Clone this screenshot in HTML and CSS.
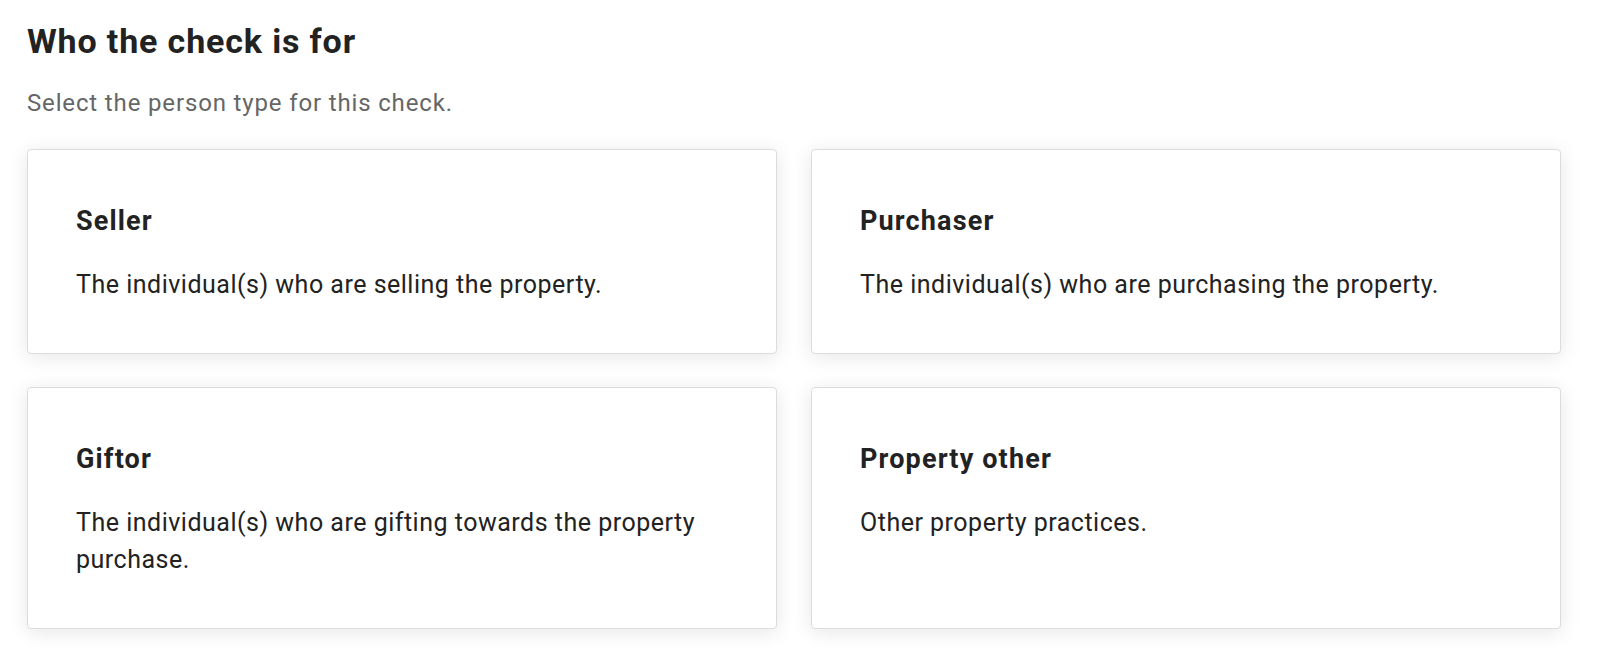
FILE: index.html
```html
<!DOCTYPE html>
<html lang="en">
<head>
<meta charset="utf-8">
<title>Who the check is for</title>
<link rel="stylesheet" href="styles.css">
</head>
<body>
<main class="page">
  <h1 class="title">Who the check is for</h1>
  <p class="subtitle">Select the person type for this check.</p>
  <div class="options">
    <div class="option">
      <h2 class="option-title">Seller</h2>
      <p class="option-text">The individual(s) who are selling the property.</p>
    </div>
    <div class="option">
      <h2 class="option-title">Purchaser</h2>
      <p class="option-text">The individual(s) who are purchasing the property.</p>
    </div>
    <div class="option">
      <h2 class="option-title">Giftor</h2>
      <p class="option-text">The individual(s) who are gifting towards the property purchase.</p>
    </div>
    <div class="option">
      <h2 class="option-title">Property other</h2>
      <p class="option-text">Other property practices.</p>
    </div>
  </div>
</main>
</body>
</html>
```

FILE: styles.css
```css
html, body {
  margin: 0;
  padding: 0;
  background: #ffffff;
}

body {
  font-family: Roboto, "Liberation Sans", Arial, sans-serif;
  color: #222222;
}

.page {
  padding: 21px 45px 20px 27px;
}

.title {
  margin: 0;
  font-size: 34px;
  line-height: 40px;
  font-weight: 700;
  letter-spacing: 0.85px;
  color: #222222;
}

.subtitle {
  margin: 25.5px 0 0;
  font-size: 24px;
  line-height: 32px;
  letter-spacing: 0.85px;
  color: #666666;
}

.options {
  margin-top: 30px;
  display: grid;
  grid-template-columns: 1fr 1fr;
  row-gap: 33px;
  column-gap: 34px;
}

.option {
  background: #ffffff;
  border: 1px solid #dcdcdc;
  border-radius: 4px;
  box-shadow: 0 3px 20px rgba(0, 0, 0, 0.1);
  padding: 55px 48px 49.5px 48px;
}

.option-title {
  margin: 0;
  font-size: 27px;
  line-height: 32px;
  font-weight: 700;
  letter-spacing: 1.15px;
  color: #222222;
}

.option-text {
  margin: 30.4px 0 0;
  font-size: 25px;
  line-height: 36.5px;
  letter-spacing: 0.5px;
  color: #222222;
}
```
